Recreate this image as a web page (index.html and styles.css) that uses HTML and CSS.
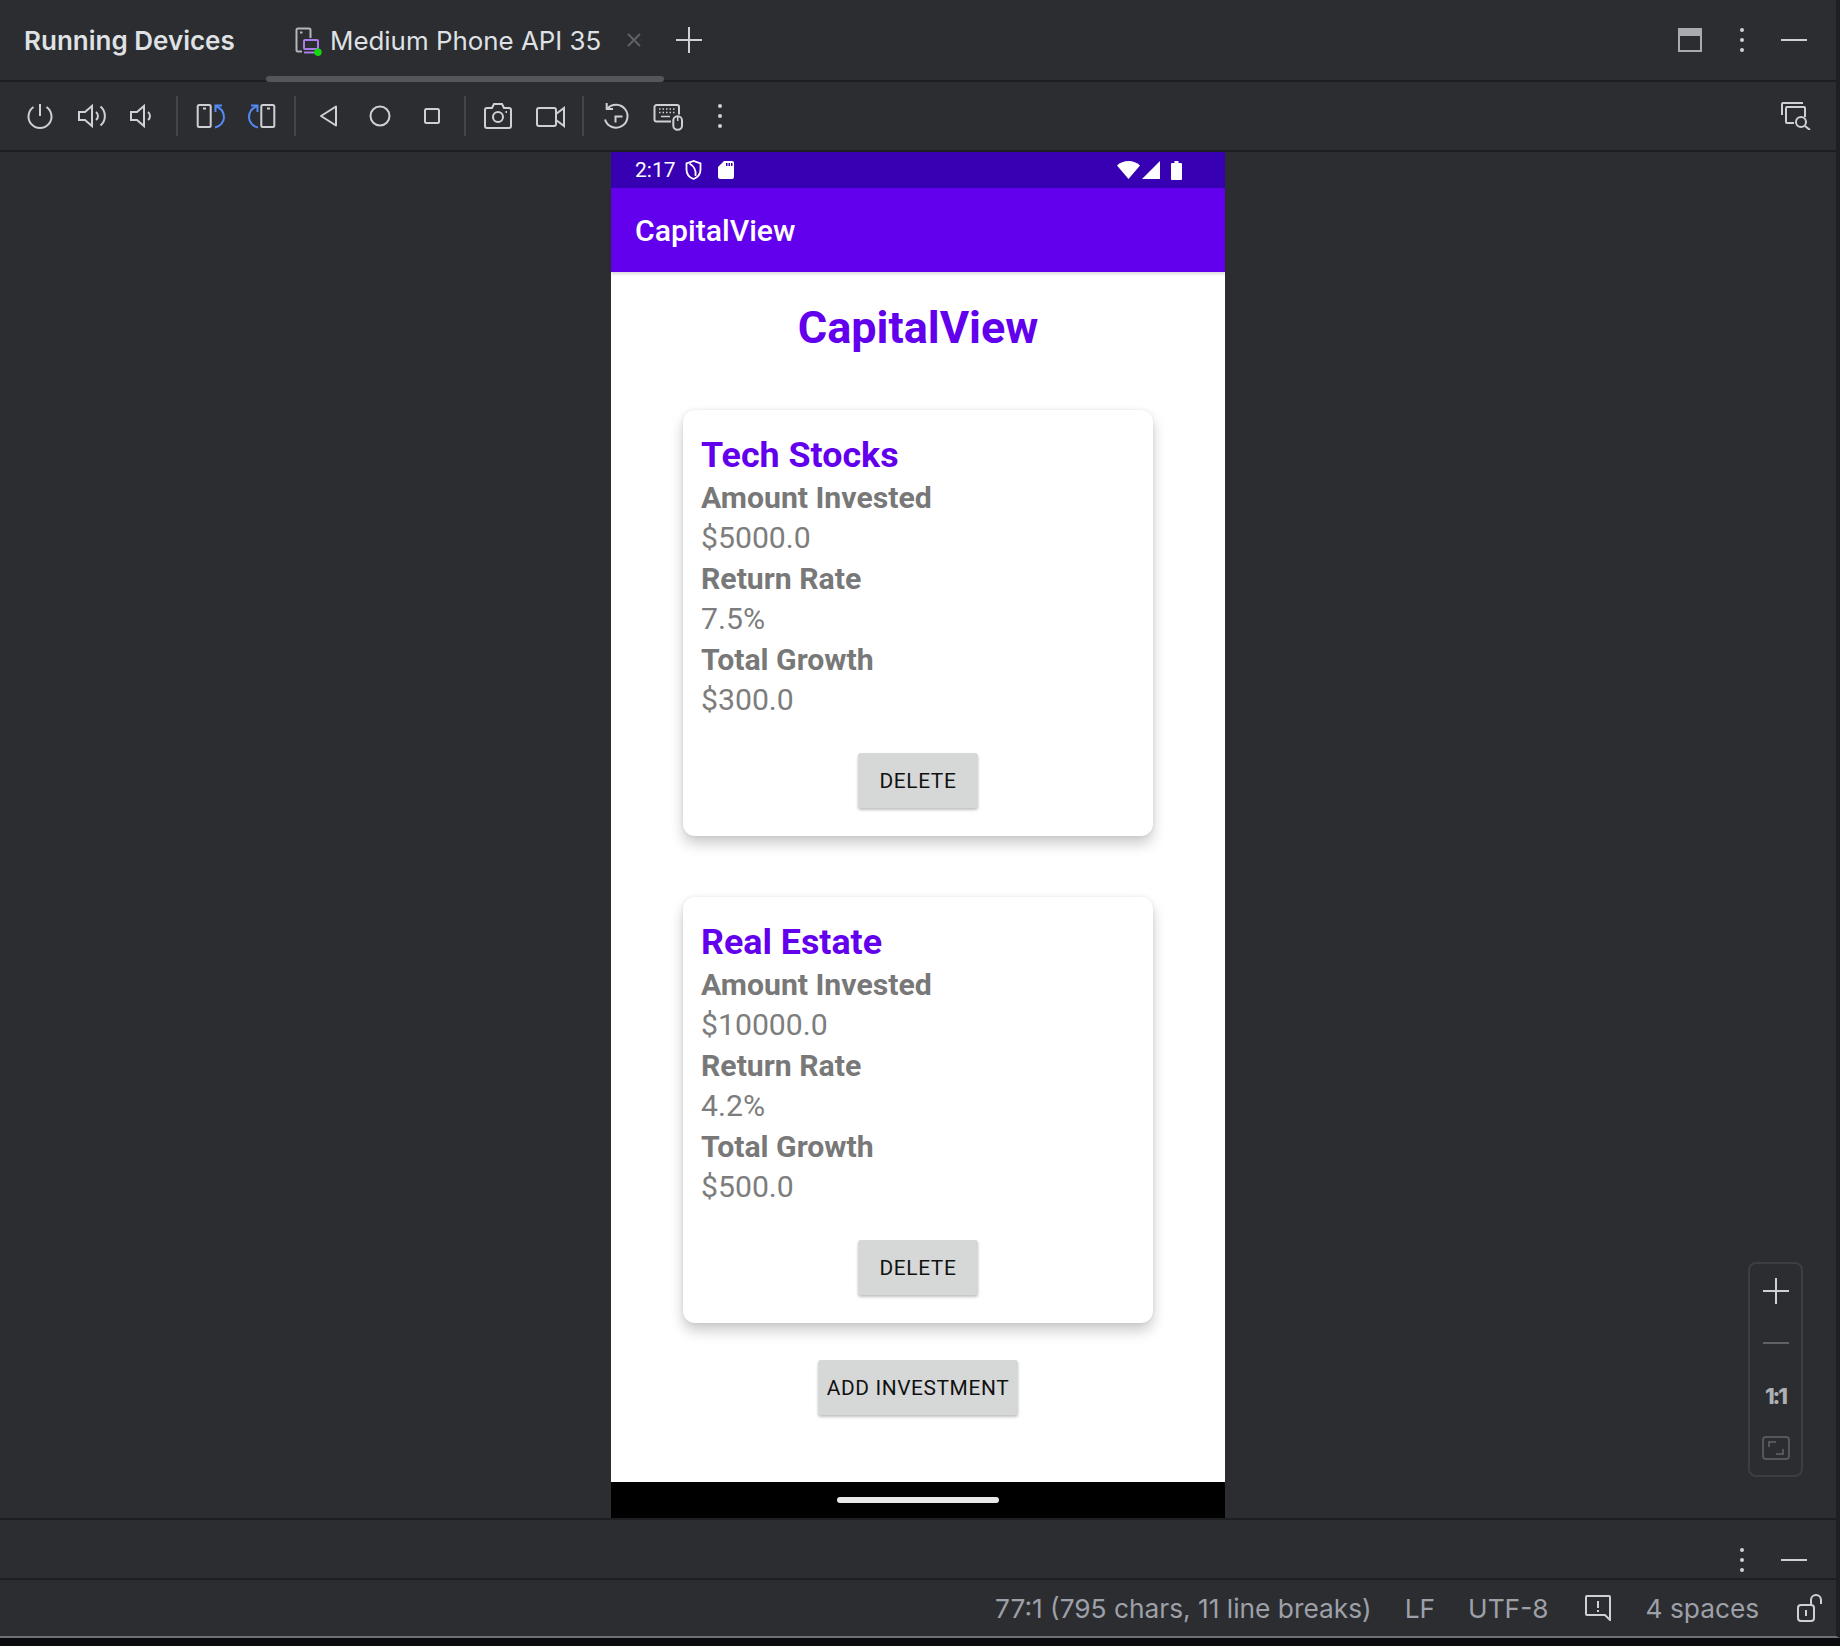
FILE: index.html
```html
<!DOCTYPE html>
<html lang="en">

<head>
    <meta charset="UTF-8">
    <meta name="viewport" content="width=device-width, initial-scale=1.0">
    <title>Running Devices</title>
    <link rel="stylesheet" href="styles.css">
</head>

<body>
    <div class="window">
        <header class="tabbar">
            <span class="panel-title">Running Devices</span>
            <div class="tab">
                <svg class="tab-icon" width="30" height="32" viewBox="0 0 30 32" fill="none">
                    <path d="M9 27.500H5a1.500 1.500 0 0 1-1.500-1.500V6A1.500 1.500 0 0 1 5 4.500h11A1.500 1.500 0 0 1 17.500 6v8" stroke="#b4b6bb" stroke-width="2" />
                    <path d="M7 8.500h2.500" stroke="#b4b6bb" stroke-width="2" />
                    <rect x="11" y="16" width="14" height="9" rx="1" stroke="#a97ee8" stroke-width="2" />
                    <path d="M11 28.500h11" stroke="#a97ee8" stroke-width="2" />
                    <circle cx="25" cy="28.300" r="3.700" fill="#16d60f" />
                </svg>
                <span class="tab-label">Medium Phone API 35</span>
                <svg class="tab-close" width="16" height="16" viewBox="0 0 16 16" fill="none">
                    <path d="M2 2l12 12M14 2L2 14" stroke="#5f6167" stroke-width="2" />
                </svg>
                <div class="tab-thumb"></div>
            </div>
            <svg class="tab-add" width="28" height="28" viewBox="0 0 28 28" fill="none">
                <path d="M14 1v26M1 14h26" stroke="#ced0d6" stroke-width="2" />
            </svg>
            <div class="tabbar-right">
                <svg width="24" height="24" viewBox="0 0 24 24" fill="none">
                    <rect x="1" y="1" width="22" height="22" stroke="#a8abb0" stroke-width="2" />
                    <rect x="0" y="0" width="24" height="8" fill="#a8abb0" />
                </svg>
                <svg width="4" height="24" viewBox="0 0 4 24" fill="#ced0d6">
                    <circle cx="2" cy="2" r="2" />
                    <circle cx="2" cy="12" r="2" />
                    <circle cx="2" cy="22" r="2" />
                </svg>
                <div class="dash"></div>
            </div>
        </header>

        <nav class="toolbar">
            <div class="tool">
                <svg width="32" height="32" viewBox="0 0 32 32" fill="none" stroke="#ced0d6" stroke-width="2">
                    <path d="M9.500 7a11.500 11.500 0 1 0 13 0" />
                    <path d="M16 4v12" />
                </svg>
            </div>
            <div class="tool">
                <svg width="32" height="32" viewBox="0 0 32 32" fill="none" stroke="#ced0d6" stroke-width="2">
                    <path d="M3 12h6l7-6v20l-7-6H3z" />
                    <path d="M20 12a5 5 0 0 1 0 8" />
                    <path d="M24.500 6.500a12.500 12.500 0 0 1 0 19" />
                </svg>
            </div>
            <div class="tool tool-low">
                <svg width="32" height="32" viewBox="0 0 32 32" fill="none" stroke="#ced0d6" stroke-width="2">
                    <path d="M7 12h6l7-6v20l-7-6H7z" />
                    <path d="M24 12a5 5 0 0 1 0 8" />
                </svg>
            </div>
            <div class="sep"></div>
            <div class="tool">
                <svg width="32" height="32" viewBox="0 0 32 32" fill="none" stroke-width="2">
                    <rect x="3.700" y="5" width="13" height="22" rx="1.500" stroke="#ced0d6" />
                    <path d="M9 8.500h3" stroke="#ced0d6" />
                    <path d="M21.500 6c5.500 2 8.500 6 8.500 11.500 0 4.500-4 9-9 10" stroke="#548af7" />
                    <path d="M21.500 12V5.500H28" stroke="#548af7" />
                </svg>
            </div>
            <div class="tool">
                <svg width="32" height="32" viewBox="0 0 32 32" fill="none" stroke-width="2">
                    <rect x="15.300" y="5" width="13" height="22" rx="1.500" stroke="#ced0d6" />
                    <path d="M21 8.500h3" stroke="#ced0d6" />
                    <path d="M11.500 6C6 8 3 12 3 17.500c0 4.500 4 9 9 10" stroke="#548af7" />
                    <path d="M11.500 12V5.500H5" stroke="#548af7" />
                </svg>
            </div>
            <div class="sep"></div>
            <div class="tool">
                <svg width="32" height="32" viewBox="0 0 32 32" fill="none" stroke="#ced0d6" stroke-width="2">
                    <path d="M24 6.500v19L9 16z" stroke-linejoin="round" />
                </svg>
            </div>
            <div class="tool">
                <svg width="32" height="32" viewBox="0 0 32 32" fill="none" stroke="#ced0d6" stroke-width="2">
                    <circle cx="16" cy="16" r="9.500" />
                </svg>
            </div>
            <div class="tool">
                <svg width="32" height="32" viewBox="0 0 32 32" fill="none" stroke="#ced0d6" stroke-width="2">
                    <rect x="9" y="9" width="14" height="14" rx="1.500" />
                </svg>
            </div>
            <div class="sep"></div>
            <div class="tool">
                <svg width="32" height="32" viewBox="0 0 32 32" fill="none" stroke="#ced0d6" stroke-width="2">
                    <path d="M5 8h5l2-4h8l2 4h5a2 2 0 0 1 2 2v16a2 2 0 0 1-2 2H5a2 2 0 0 1-2-2V10a2 2 0 0 1 2-2z" />
                    <circle cx="16" cy="17" r="5" />
                    <path d="M23.500 12h1.500" />
                </svg>
            </div>
            <div class="tool">
                <svg width="32" height="32" viewBox="0 0 32 32" fill="none" stroke="#ced0d6" stroke-width="2">
                    <rect x="3" y="8" width="19" height="18" rx="2" />
                    <path d="M22 14l8-6v18l-8-6" />
                </svg>
            </div>
            <div class="sep"></div>
            <div class="tool">
                <svg width="32" height="32" viewBox="0 0 32 32" fill="none" stroke="#ced0d6" stroke-width="2">
                    <path d="M7.500 8.500A11.500 11.500 0 1 1 5 19.500" />
                    <path d="M6.700 3v6h6.300" />
                    <path d="M22.500 16.500h-7v6" />
                </svg>
            </div>
            <div class="tool">
                <svg width="32" height="32" viewBox="0 0 32 32" fill="none" stroke="#ced0d6" stroke-width="2">
                    <path d="M19 21.500H4.500a2 2 0 0 1-2-2V7a2 2 0 0 1 2-2H25a2 2 0 0 1 2 2v7.500" />
                    <path d="M7 9h1.500M10.500 9H12M14 9h1.500M17.500 9H19M21 9h1.500M7 12.500h1.500M10.500 12.500H12M14 12.500h1.500M17.500 12.500H19M21 12.500h1.500" stroke-width="1.500" />
                    <path d="M9 16.500h9" stroke-width="1.500" />
                    <rect x="21.300" y="16.300" width="8.700" height="13.400" rx="4.300" />
                    <path d="M25.700 17v4" stroke-width="1.500" />
                </svg>
            </div>
            <div class="tool">
                <svg width="4" height="24" viewBox="0 0 4 24" fill="#ced0d6">
                    <circle cx="2" cy="2" r="2" />
                    <circle cx="2" cy="12" r="2" />
                    <circle cx="2" cy="22" r="2" />
                </svg>
            </div>
            <svg class="toolbar-search" width="30" height="28" viewBox="0 0 30 28" fill="none" stroke="#ced0d6" stroke-width="2">
                <path d="M1 13V2a1 1 0 0 1 1-1h20" />
                <path d="M13 21H6a1 1 0 0 1-1-1V6a1 1 0 0 1 1-1h17a1 1 0 0 1 1 1v9" />
                <circle cx="20" cy="20" r="5" fill="#2b2d30" />
                <path d="M24 24l5 4" />
            </svg>
        </nav>

        <main class="stage">
            <div class="phone">
                <div class="status-bar">
                    <span class="clock">2:17</span>
                    <svg class="shield" width="17" height="20" viewBox="0 0 17 20" fill="none" stroke="#fff" stroke-width="1.800">
                        <path d="M8.500 1L1.500 3.500v6c0 4.500 3 8 7 9.500 4-1.500 7-5 7-9.500v-6z" />
                        <path d="M4.500 3.500c5 3 7 6.500 6 12.500" />
                    </svg>
                    <svg class="sd-card" width="16" height="18" viewBox="0 0 16 18" fill="#fff">
                        <path d="M6 0h8a2 2 0 0 1 2 2v14a2 2 0 0 1-2 2H2a2 2 0 0 1-2-2V6z" />
                        <path d="M8 2h1.500v3H8zM10.500 2H12v3h-1.500zM13 2h1.500v3H13z" fill="#3700b3" />
                    </svg>
                    <div class="status-right">
                        <svg width="23" height="18" viewBox="0 0 23 18" fill="#fff">
                            <path d="M0 4.500C3 1.500 7 0 11.500 0S20 1.500 23 4.500L11.500 18z" />
                        </svg>
                        <svg class="signal" width="18" height="18" viewBox="0 0 18 18" fill="#fff">
                            <path d="M18 0v18H0z" />
                        </svg>
                        <svg class="battery" width="11" height="19" viewBox="0 0 11 19" fill="#fff">
                            <path d="M3.500 0h4v2H10a1 1 0 0 1 1 1v15a1 1 0 0 1-1 1H1a1 1 0 0 1-1-1V3a1 1 0 0 1 1-1h2.500z" />
                        </svg>
                    </div>
                </div>
                <div class="app-bar">CapitalView</div>
                <div class="app-content">
                    <h1 class="app-heading">CapitalView</h1>

                    <section class="card">
                        <h2 class="card-title">Tech Stocks</h2>
                        <div class="card-label">Amount Invested</div>
                        <div class="card-value">$5000.0</div>
                        <div class="card-label">Return Rate</div>
                        <div class="card-value">7.5%</div>
                        <div class="card-label">Total Growth</div>
                        <div class="card-value">$300.0</div>
                        <button class="btn btn-delete">DELETE</button>
                    </section>

                    <section class="card">
                        <h2 class="card-title">Real Estate</h2>
                        <div class="card-label">Amount Invested</div>
                        <div class="card-value">$10000.0</div>
                        <div class="card-label">Return Rate</div>
                        <div class="card-value">4.2%</div>
                        <div class="card-label">Total Growth</div>
                        <div class="card-value">$500.0</div>
                        <button class="btn btn-delete">DELETE</button>
                    </section>

                    <button class="btn btn-add">ADD INVESTMENT</button>
                </div>
                <div class="nav-bar">
                    <div class="nav-handle"></div>
                </div>
            </div>

            <div class="zoom-box">
                <svg width="26" height="26" viewBox="0 0 26 26" fill="none">
                    <path d="M13 0v26M0 13h26" stroke="#ced0d6" stroke-width="2" />
                </svg>
                <div class="zoom-out"></div>
                <span class="zoom-one">1:1</span>
                <svg width="28" height="24" viewBox="0 0 28 24" fill="none" stroke="#55575c" stroke-width="2">
                    <rect x="1" y="1" width="26" height="22" rx="3" />
                    <path d="M7 11V6h7M21 13v5h-7" />
                </svg>
            </div>
        </main>

        <div class="lower-panel">
            <svg width="4" height="24" viewBox="0 0 4 24" fill="#ced0d6">
                <circle cx="2" cy="2" r="2" />
                <circle cx="2" cy="12" r="2" />
                <circle cx="2" cy="22" r="2" />
            </svg>
            <div class="dash"></div>
        </div>

        <footer class="statusline">
            <span class="pos">77:1 (795 chars, 11 line breaks)</span>
            <span class="eol">LF</span>
            <span class="enc">UTF-8</span>
            <svg class="msg" width="26" height="26" viewBox="0 0 26 26" fill="none" stroke="#ced0d6" stroke-width="2">
                <path d="M2 1h22a1 1 0 0 1 1 1v23l-5-5H2a1 1 0 0 1-1-1V2a1 1 0 0 1 1-1z" />
                <path d="M13 6v7M13 15v2" />
            </svg>
            <span class="indent">4 spaces</span>
            <svg class="lock" width="26" height="28" viewBox="0 0 26 28" fill="none" stroke="#ced0d6" stroke-width="2">
                <rect x="1" y="11" width="16" height="16" rx="3" />
                <path d="M9 16v6" />
                <path d="M14 11V6a5 5 0 0 1 10 0v4" />
            </svg>
        </footer>
    </div>
    <div class="desktop-edge"></div>
</body>

</html>
```

FILE: styles.css
```css
* {
    box-sizing: border-box;
}

body {
    margin: 0;
    padding: 0;
    height: 1646px;
    overflow: hidden;
    background-color: #0a0b0e;
    font-family: 'Inter', sans-serif;
}

.window {
    height: 1638px;
    display: flex;
    flex-direction: column;
    background-color: #2b2d30;
    border-right: 4px solid #1e1f22;
    border-bottom: 2px solid #6f7176;
}

/* tab strip */
.tabbar {
    height: 82px;
    flex: none;
    display: flex;
    align-items: center;
    padding-left: 24px;
    border-bottom: 2px solid #1e1f22;
}

.panel-title {
    width: 269px;
    font-size: 26px;
    font-weight: 600;
    color: #dfe1e5;
}

.tab {
    position: relative;
    height: 80px;
    display: flex;
    align-items: center;
}

.tab-icon {
    margin-right: 7px;
}

.tab-label {
    font-size: 25.900px;
    color: #dfe1e5;
}

.tab-close {
    margin-left: 25px;
}

.tab-thumb {
    position: absolute;
    left: -27px;
    top: 76px;
    width: 398px;
    height: 6px;
    border-radius: 3px;
    background-color: #54565c;
}

.tab-add {
    margin-left: 33px;
}

.tabbar-right {
    margin-left: auto;
    display: flex;
    align-items: center;
    gap: 38px;
    padding-right: 29px;
}

.dash {
    width: 26px;
    height: 2px;
    margin-left: -1px;
    background-color: #ced0d6;
}

/* device controls */
.toolbar {
    height: 70px;
    flex: none;
    display: flex;
    align-items: center;
    padding: 0 25px 0 14px;
    border-bottom: 2px solid #1e1f22;
}

.tool {
    width: 52px;
    height: 32px;
    display: flex;
    align-items: center;
    justify-content: center;
}

.tool-low svg {
    margin-right: 8px;
}

.sep {
    width: 2px;
    height: 40px;
    margin: 0 6px;
    background-color: #43454a;
}

.toolbar-search {
    margin-left: auto;
}

/* emulator area */
.stage {
    position: relative;
    height: 1368px;
    flex: none;
    display: flex;
    justify-content: center;
    border-bottom: 2px solid #1e1f22;
}

.phone {
    width: 614px;
    height: 1366px;
    display: flex;
    flex-direction: column;
    background-color: #fff;
    font-family: 'Roboto', sans-serif;
}

.status-bar {
    height: 36px;
    flex: none;
    display: flex;
    align-items: center;
    padding: 0 43px 0 24px;
    background-color: #3700b3;
    color: #fff;
}

.clock {
    font-size: 21px;
}

.shield {
    margin-left: 9px;
}

.sd-card {
    margin-left: 16px;
}

.status-right {
    margin-left: auto;
    display: flex;
    align-items: center;
}

.signal {
    margin-left: 2px;
}

.battery {
    margin-left: 11px;
}

.app-bar {
    height: 84px;
    flex: none;
    display: flex;
    align-items: center;
    padding: 0 24px;
    background-color: #6200ee;
    color: #fff;
    font-size: 30.200px;
    font-weight: 500;
    box-shadow: 0 2px 3px rgba(0, 0, 0, 0.15);
    position: relative;
}

.app-content {
    flex: 1;
    display: flex;
    flex-direction: column;
    align-items: center;
}

.app-heading {
    margin: 30px 0 0;
    font-size: 45px;
    line-height: 52px;
    font-weight: 700;
    color: #6200ee;
}

.card {
    width: 470px;
    height: 426px;
    margin-top: 56px;
    padding: 23px 18px 0;
    display: flex;
    flex-direction: column;
    align-items: flex-start;
    border-radius: 12px;
    background-color: #fff;
    box-shadow: 0 8px 14px rgba(0, 0, 0, 0.2), 0 0 4px rgba(0, 0, 0, 0.08);
}

.card + .card {
    margin-top: 61px;
}

.card-title {
    margin: 0;
    font-size: 35.800px;
    line-height: 45px;
    font-weight: 700;
    color: #6200ee;
}

.card-label,
.card-value {
    font-size: 30.200px;
    line-height: 40.400px;
}

.card-label {
    font-weight: 700;
    color: #787878;
}

.card-value {
    color: #7d7d7d;
}

.btn {
    height: 55px;
    border: none;
    border-radius: 3px;
    padding: 0;
    background-color: #d6d7d7;
    color: #111;
    font-family: 'Roboto', sans-serif;
    font-size: 20.900px;
    font-weight: 400;
    letter-spacing: 0.6px;
    box-shadow: 0 2px 3px rgba(0, 0, 0, 0.25);
}

.btn-delete {
    width: 120px;
    margin: 33px auto 0;
}

.btn-add {
    width: 200px;
    margin-top: 37px;
}

.nav-bar {
    height: 36px;
    flex: none;
    display: flex;
    align-items: center;
    justify-content: center;
    background-color: #000;
}

.nav-handle {
    width: 162px;
    height: 6px;
    border-radius: 3px;
    background-color: #e8e8e8;
}

/* zoom controls on top of the stage */
.zoom-box {
    position: absolute;
    left: 1748px;
    top: 1110px;
    width: 55px;
    height: 215px;
    padding-top: 1px;
    display: grid;
    grid-auto-rows: 52.300px;
    justify-items: center;
    align-items: center;
    border: 2px solid #3c3e42;
    border-radius: 8px;
}

.zoom-out {
    width: 26px;
    height: 2px;
    background-color: #5f6167;
}

.zoom-one {
    font-size: 22px;
    line-height: 1;
    font-weight: 800;
    letter-spacing: -2px;
    color: #aeb0b5;
}

.lower-panel {
    height: 60px;
    flex: none;
    display: flex;
    align-items: center;
    justify-content: flex-end;
    gap: 38px;
    padding: 22px 29px 0 0;
    border-bottom: 2px solid #1e1f22;
}

.statusline {
    flex: 1;
    display: flex;
    align-items: center;
    font-size: 26.300px;
    color: #9da0a8;
    padding-left: 995px;
}

.eol {
    margin-left: 33px;
}

.enc {
    margin-left: 33px;
}

.msg {
    margin-left: 36px;
}

.indent {
    margin-left: 35px;
}

.lock {
    margin-left: 38px;
}

.desktop-edge {
    height: 8px;
}
```
